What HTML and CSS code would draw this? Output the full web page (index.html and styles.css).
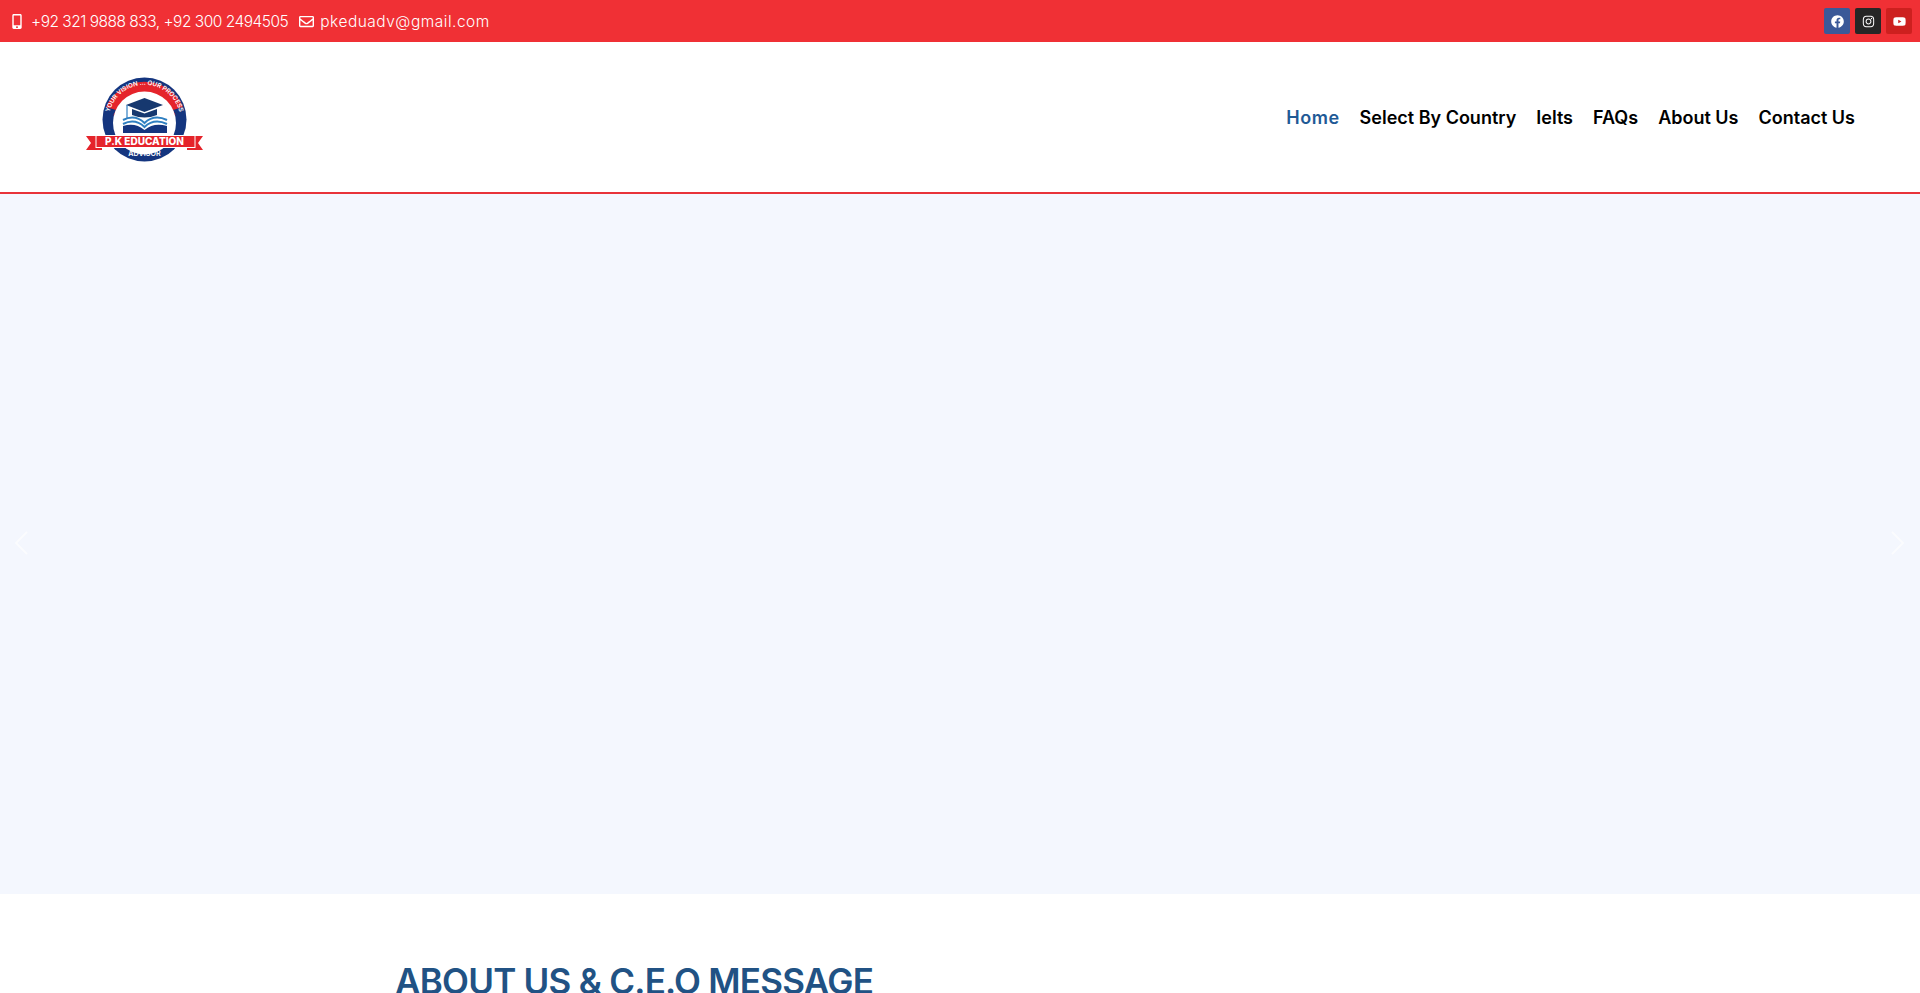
FILE: index.html
```html
<!DOCTYPE html>
<html lang="en">
<head>
<meta charset="utf-8">
<title>P.K Education Advisor</title>
<link rel="stylesheet" href="styles.css">
</head>
<body>
<div class="topbar">
  <div class="contact">
    <span class="contact-item phone">
      <svg class="ico-mobile" viewBox="0 0 320 512"><path d="M272 0H48C21.500 0 0 21.500 0 48v416c0 26.500 21.500 48 48 48h224c26.500 0 48-21.500 48-48V48c0-26.500-21.500-48-48-48zM160 480c-17.700 0-32-14.300-32-32s14.300-32 32-32 32 14.300 32 32-14.300 32-32 32zm112-108c0 6.600-5.400 12-12 12H60c-6.600 0-12-5.400-12-12V60c0-6.600 5.400-12 12-12h200c6.600 0 12 5.400 12 12v312z"/></svg>
      <span class="phone-text">+92 321 9888 833, +92 300 2494505</span>
    </span>
    <span class="contact-item mail">
      <svg class="ico-mail" viewBox="0 0 512 512"><path d="M464 64H48C21.490 64 0 85.490 0 112v288c0 26.510 21.490 48 48 48h416c26.510 0 48-21.490 48-48V112c0-26.510-21.490-48-48-48zm0 48v40.805c-22.422 18.259-58.168 46.651-134.587 106.490-16.841 13.247-50.201 45.072-73.413 44.701-23.208.375-56.579-31.459-73.413-44.701C106.180 199.465 70.425 171.067 48 152.805V112h416zM48 400V214.398c22.914 18.251 55.409 43.862 104.938 82.646 21.857 17.205 60.134 55.186 103.062 54.955 42.717.231 80.509-37.199 103.053-54.947 49.528-38.783 82.032-64.401 104.947-82.653V400H48z"/></svg>
      <span class="mail-text">pkeduadv@gmail.com</span>
    </span>
  </div>
  <div class="social">
    <a class="soc fb"><svg viewBox="0 0 512 512"><path d="M504 256C504 119 393 8 256 8S8 119 8 256c0 123.780 90.690 226.380 209.250 245V327.690h-63V256h63v-54.640c0-62.150 37-96.480 93.670-96.480 27.140 0 55.520 4.840 55.520 4.840v61h-31.280c-30.800 0-40.410 19.120-40.410 38.730V256h68.780l-11 71.690h-57.780V501C413.310 482.380 504 379.780 504 256z"/></svg></a>
    <a class="soc ig"><svg viewBox="0 0 448 512"><path d="M224.100 141c-63.600 0-114.900 51.300-114.900 114.900s51.300 114.900 114.900 114.900S339 319.500 339 255.900 287.700 141 224.100 141zm0 189.600c-41.100 0-74.700-33.500-74.700-74.700s33.500-74.700 74.700-74.700 74.700 33.500 74.700 74.700-33.600 74.700-74.700 74.700zm146.400-194.300c0 14.900-12 26.800-26.800 26.800-14.900 0-26.800-12-26.800-26.800s12-26.800 26.800-26.800 26.800 12 26.800 26.800zm76.100 27.200c-1.700-35.900-9.900-67.700-36.200-93.900-26.200-26.200-58-34.400-93.900-36.200-37-2.100-147.900-2.100-184.900 0-35.800 1.700-67.600 9.900-93.900 36.100s-34.400 58-36.200 93.900c-2.100 37-2.100 147.900 0 184.900 1.700 35.900 9.900 67.700 36.200 93.900s58 34.400 93.900 36.200c37 2.100 147.900 2.100 184.900 0 35.900-1.700 67.700-9.900 93.900-36.200 26.200-26.200 34.400-58 36.200-93.900 2.100-37 2.100-147.800 0-184.800zM398.800 388c-7.800 19.600-22.900 34.700-42.600 42.600-29.500 11.700-99.500 9-132.100 9s-102.700 2.600-132.100-9c-19.600-7.800-34.700-22.900-42.600-42.600-11.700-29.500-9-99.500-9-132.100s-2.600-102.700 9-132.100c7.800-19.600 22.900-34.700 42.600-42.600 29.500-11.700 99.500-9 132.100-9s102.700-2.600 132.100 9c19.600 7.800 34.700 22.900 42.600 42.600 11.700 29.500 9 99.500 9 132.100s2.700 102.700-9 132.100z"/></svg></a>
    <a class="soc yt"><svg viewBox="0 0 576 512"><path d="M549.655 124.083c-6.281-23.650-24.787-42.276-48.284-48.597C458.781 64 288 64 288 64S117.220 64 74.629 75.486c-23.497 6.322-42.003 24.947-48.284 48.597-11.412 42.867-11.412 132.305-11.412 132.305s0 89.438 11.412 132.305c6.281 23.650 24.787 41.500 48.284 47.821C117.220 448 288 448 288 448s170.780 0 213.371-11.486c23.497-6.321 42.003-24.171 48.284-47.821 11.412-42.867 11.412-132.305 11.412-132.305s0-89.438-11.412-132.305zm-317.510 213.508V175.185l142.739 81.205-142.739 81.201z"/></svg></a>
  </div>
</div>

<header class="header">
  <svg class="logo" viewBox="0 0 150 110">
    <defs><path id="arc" d="M40 50.500 A36 36 0 0 1 109 50.500"/></defs>
    <circle cx="74.500" cy="59.500" r="42" fill="#14357f"/>
    <path d="M36 47 A42 42 0 0 1 113 47 L103 50 L106 56 L102 52 A31.500 31.500 0 0 0 47 52 L43 56 L46 50 Z" fill="#e5242b"/>
    <circle cx="74.500" cy="63" r="31.500" fill="#fff"/>
    <text class="logo-arc"><textPath href="#arc" startOffset="50%" text-anchor="middle">YOUR VISION ... OUR PROCESS</textPath></text>
    <path d="M74.500 38 L93 45 L74.500 52 L56 45 Z" fill="#16386f"/>
    <path d="M62 49 V55 Q74.500 60 87 55 V49 L74.500 53.500 Z" fill="#16386f"/>
    <path d="M57 45 V58" stroke="#2f7fc1" stroke-width="1.200" fill="none"/>
    <path d="M53 60 Q65 54 74.500 63 Q84 54 97 60" stroke="#2f7fc1" stroke-width="2" fill="none"/>
    <path d="M53 64 Q65 58 74.500 67 Q84 58 97 64" stroke="#2f7fc1" stroke-width="2" fill="none"/>
    <path d="M53 66 Q65 62 74.500 70 Q84 62 97 66 V73 H53 Z" fill="#14357f"/>
    <path d="M16 76 H32 V90 H16 L21 83 Z" fill="#e5242b"/>
    <path d="M133 76 H117 V90 H133 L128 83 Z" fill="#e5242b"/>
    <rect x="26" y="75.500" width="99" height="12" fill="#e5242b" stroke="#fff" stroke-width="1"/>
    <text class="logo-name" x="74.500" y="85" text-anchor="middle">P.K EDUCATION</text>
    <text class="logo-sub" x="74.500" y="96" text-anchor="middle">ADVISOR</text>
  </svg>
  <nav class="nav">
    <a class="nav-link active">Home</a>
    <a class="nav-link">Select By Country</a>
    <a class="nav-link">Ielts</a>
    <a class="nav-link">FAQs</a>
    <a class="nav-link">About Us</a>
    <a class="nav-link">Contact Us</a>
  </nav>
</header>

<section class="hero">
  <svg class="arrow arrow-prev" viewBox="0 0 14 26"><path d="M13 1 L1 13 L13 25"/></svg>
  <svg class="arrow arrow-next" viewBox="0 0 14 26"><path d="M1 1 L13 13 L1 25"/></svg>
</section>

<section class="about">
  <h2 class="about-title">ABOUT US &amp; C.E.O MESSAGE</h2>
</section>
</body>
</html>
```

FILE: styles.css
```css
* { box-sizing: border-box; }
html, body { margin: 0; height: 100%; overflow: hidden; background: #fff; }
body { font-family: "Inter", "Liberation Sans", sans-serif; }

.topbar {
  height: 42px;
  background: #f03035;
  display: flex;
  align-items: center;
  justify-content: space-between;
  padding: 0 8px 0 12px;
  color: #fff;
}
.contact { display: flex; gap: 11px; font-size: 15.500px; font-weight: 300; }
.contact-item { display: flex; align-items: center; gap: 9px; white-space: nowrap; }
.mail { gap: 6px; }
.phone-text { letter-spacing: -0.500px; }
.mail-text { letter-spacing: 0.500px; }
.ico-mobile { width: 10px; height: 15px; fill: #fff; }
.ico-mail { width: 15px; height: 15px; fill: #fff; }
.social { display: flex; gap: 5px; }
.soc { width: 26px; height: 26px; border-radius: 2px; display: flex; align-items: center; justify-content: center; }
.soc svg { width: 13px; height: 13px; fill: #fff; }
.fb { background: #3b5998; }
.ig { background: #262626; }
.yt { background: #cd201f; }

.header {
  height: 152px;
  border-bottom: 2px solid #e8333a;
  display: flex;
  align-items: center;
  justify-content: space-between;
  padding: 0 65px 0 70px;
  background: #fff;
}
.logo { width: 150px; height: 110px; margin-top: -4px; }
.logo-arc { font: 600 6.300px "Inter", sans-serif; fill: #fff; }
.logo-name { font: 800 10px "Inter", sans-serif; fill: #fff; }
.logo-sub { font: 600 7.200px "Inter", sans-serif; fill: #fff; }

.nav { display: flex; gap: 20px; margin-top: 1px; }
.nav-link { font-size: 18px; font-weight: 600; color: #000; white-space: nowrap; }
.nav-link.active { color: #1f5a96; letter-spacing: 0.500px; }

.hero {
  position: relative;
  height: 700px;
  background: #f4f7fe;
}
.arrow { position: absolute; top: 337px; width: 13px; height: 24px; fill: none; stroke: #fff; stroke-width: 2; opacity: 0.7; }
.arrow-prev { left: 15px; }
.arrow-next { right: 16px; }

.about { padding: 65px 0 0 395px; }
.about-title {
  margin: 0;
  font-size: 35px;
  line-height: 44px;
  font-weight: 600;
  letter-spacing: -0.750px;
  color: #215284;
  white-space: nowrap;
}
```
